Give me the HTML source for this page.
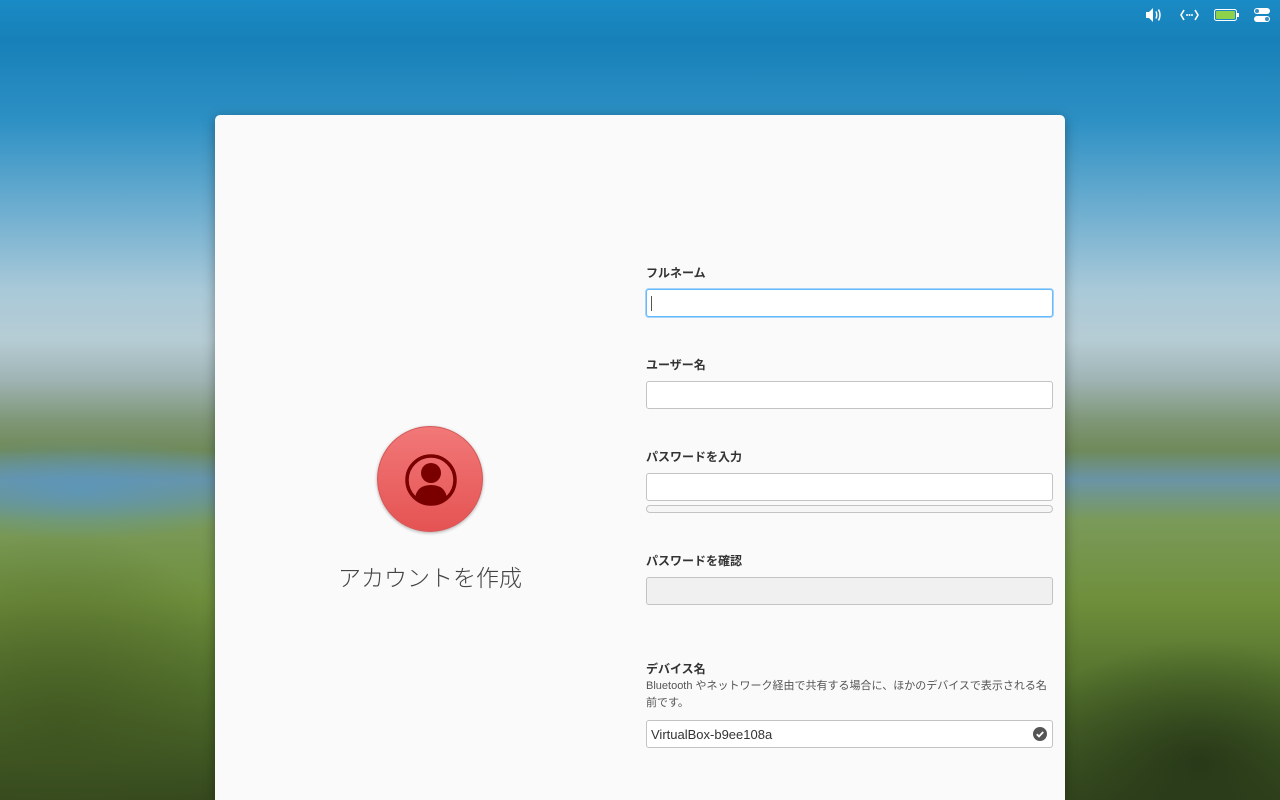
<!DOCTYPE html>
<html><head><meta charset="utf-8"><style>
*{margin:0;padding:0;box-sizing:border-box}
html,body{width:1280px;height:800px;overflow:hidden}
body{position:relative;font-family:"Liberation Sans","Noto Sans CJK JP",sans-serif}
.bg{position:absolute;left:0;top:0;width:1280px;height:800px;
background:
radial-gradient(ellipse 200px 50px at 80px 490px,rgba(90,150,190,.8),transparent),
radial-gradient(ellipse 180px 120px at 1200px 760px,rgba(30,45,20,.7),transparent),
radial-gradient(ellipse 200px 200px at 60px 730px,rgba(60,80,30,.6),transparent),
linear-gradient(180deg,#1a8bc6 0px,#1780b8 40px,#2d90c4 120px,#6eaed0 210px,#a9c9d8 290px,#b6ccd4 340px,#9fb4b4 380px,#7f9778 420px,#6f8a5a 450px,#6a94a6 480px,#7a9a5a 520px,#6f8f3c 600px,#52702c 690px,#34481e 800px);}
.bar{position:absolute;top:0;right:0;height:30px}
.card{position:absolute;left:215px;top:115px;width:850px;height:685px;background:#fafafa;border-radius:5px 5px 0 0;box-shadow:0 3px 12px rgba(0,0,0,.35)}
.lbl{position:absolute;left:646px;font-size:12px;font-weight:bold;color:#333}
.in{position:absolute;left:646px;width:407px;height:28px;background:#fff;border:1px solid #c3c3c3;border-radius:3px}
.avatar{position:absolute;left:377px;top:426px;width:106px;height:106px;border-radius:50%;background:linear-gradient(#f27878,#e55353);border:1px solid #d45858;box-shadow:0 1px 3px rgba(0,0,0,.3)}
</style></head><body>
<div class="bg"></div>
<svg class="bar" width="140" height="30" viewBox="1140 0 140 30">
<path d="M1146 12h3l4-4v14l-4-4h-3z" fill="#fff"/>
<path d="M1156 11.5q1.5 3.5 0 7M1158.5 9.5q3 5.5 0 11" stroke="#fff" stroke-width="1.5" fill="none"/>
<path d="M1184 10l-3 5 3 5M1195 10l3 5-3 5" stroke="#fff" stroke-width="1.6" fill="none"/>
<circle cx="1187" cy="15" r="1" fill="#fff"/><circle cx="1189.5" cy="15" r="1" fill="#fff"/><circle cx="1192" cy="15" r="1" fill="#fff"/>
<rect x="1214.5" y="9.5" width="22" height="11" rx="2" fill="none" stroke="#fff"/>
<rect x="1216" y="11" width="19" height="8" rx="1" fill="#8ed14a"/>
<rect x="1237" y="13" width="2" height="4" fill="#fff"/>
<rect x="1254" y="8" width="16" height="6" rx="3" fill="#fff"/><circle cx="1257" cy="11" r="2" fill="#3a8ec0"/>
<rect x="1254" y="16" width="16" height="6" rx="3" fill="#fff"/><circle cx="1267" cy="19" r="2" fill="#3a8ec0"/>
</svg>
<div class="card"></div>
<div class="avatar"><svg width="106" height="106" viewBox="0 0 106 106"><circle cx="53" cy="53" r="24" fill="none" stroke="#7a0000" stroke-width="3.5"/><circle cx="53" cy="46" r="10" fill="#7a0000"/><path d="M37 71q2-13 16-13t16 13q-7 6-16 6t-16-6z" fill="#7a0000"/></svg></div>
<div style="position:absolute;left:300px;width:260px;top:559px;text-align:center;font-size:23px;color:#444;font-weight:300;font-family:'Noto Sans CJK JP',sans-serif">アカウントを作成</div>
<div class="lbl" style="top:264px">フルネーム</div>
<div class="in" style="top:289px;border:1px solid #64baff;box-shadow:0 0 0 1px #a7d3f9"><div style="position:absolute;left:4px;top:6px;width:1px;height:15px;background:#555"></div></div>
<div class="lbl" style="top:356px">ユーザー名</div>
<div class="in" style="top:381px"></div>
<div class="lbl" style="top:448px">パスワードを入力</div>
<div class="in" style="top:473px"></div>
<div style="position:absolute;left:646px;top:505px;width:407px;height:8px;border:1px solid #c3c3c3;border-radius:4px;background:#f6f6f6"></div>
<div class="lbl" style="top:552px">パスワードを確認</div>
<div class="in" style="top:577px;background:#f0f0f0"></div>
<div class="lbl" style="top:660px">デバイス名</div>
<div style="position:absolute;left:646px;top:678px;width:410px;font-size:11px;line-height:17px;color:#555">Bluetooth やネットワーク経由で共有する場合に、ほかのデバイスで表示される名前です。</div>
<div class="in" style="top:720px"><div style="position:absolute;left:4px;top:6px;font-size:13px;color:#333">VirtualBox-b9ee108a</div>
<svg style="position:absolute;right:5px;top:6px" width="14" height="14" viewBox="0 0 14 14"><circle cx="7" cy="7" r="7" fill="#555"/><path d="M3.8 7.2l2.2 2.2 4.2-4.4" stroke="#fff" stroke-width="1.8" fill="none"/></svg></div>
</body></html>
